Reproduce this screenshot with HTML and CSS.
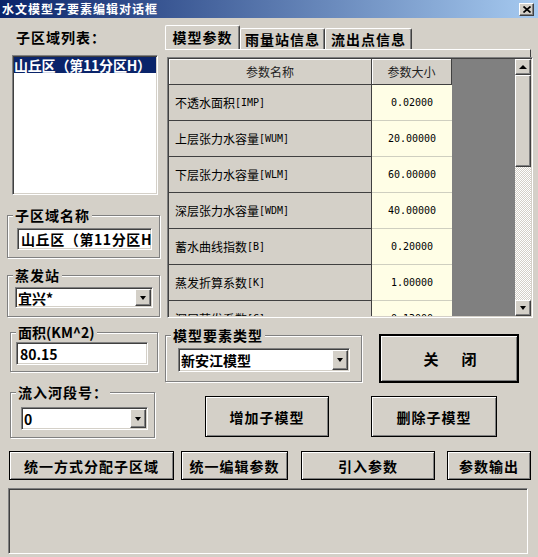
FILE: index.html
```html
<!DOCTYPE html>
<html lang="zh-CN">
<head>
    <meta charset="UTF-8">
    <title>水文模型子要素编辑对话框</title>
    <link rel="stylesheet" href="styles.css">
</head>
<body>

<div class="dialog">
    <div class="titlebar">
        <span class="title">水文模型子要素编辑对话框</span>
        <span class="title-close">
            <svg width="8" height="7" viewBox="0 0 8 7"><path d="M0.5 0.5 L7.5 6.5 M7.5 0.5 L0.5 6.5" stroke="#000" stroke-width="1.7"/></svg>
        </span>
    </div>

    <div class="main">
        <!-- left column -->
        <div class="left-col">
            <div class="list-label">子区域列表：</div>
            <div class="listbox sunken">
                <div class="list-item selected">山丘区（第11分区H）</div>
            </div>

            <div class="group g-name">
                <div class="group-title">子区域名称</div>
                <div class="textbox sunken tb-name">山丘区（第11分区H</div>
            </div>

            <div class="group g-evap">
                <div class="group-title">蒸发站</div>
                <div class="combo sunken cb-evap">
                    <span class="combo-text">宜兴*</span>
                    <span class="combo-btn raised"><span class="arrow-down"></span></span>
                </div>
            </div>

            <div class="group g-area">
                <div class="group-title title-area">面积(KM^2)</div>
                <div class="textbox sunken tb-area">80.15</div>
            </div>

            <div class="group g-inflow">
                <div class="group-title">流入河段号：</div>
                <div class="combo sunken cb-inflow">
                    <span class="combo-text">0</span>
                    <span class="combo-btn raised"><span class="arrow-down"></span></span>
                </div>
            </div>
        </div>

        <!-- right column -->
        <div class="right-col">
            <div class="tabs">
                <div class="tab active tab-1">模型参数</div>
                <div class="tab tab-2">雨量站信息</div>
                <div class="tab tab-3">流出点信息</div>
            </div>
            <div class="tab-line"></div>

            <div class="grid sunken">
                <div class="grid-table">
                    <div class="grid-head">
                        <div class="head-name">参数名称</div>
                        <div class="head-val">参数大小</div>
                    </div>
                    <div class="grid-row"><div class="cell-name">不透水面积<span class="mono">[IMP]</span></div><div class="cell-val">0.02000</div></div>
                    <div class="grid-row"><div class="cell-name">上层张力水容量<span class="mono">[WUM]</span></div><div class="cell-val">20.00000</div></div>
                    <div class="grid-row"><div class="cell-name">下层张力水容量<span class="mono">[WLM]</span></div><div class="cell-val">60.00000</div></div>
                    <div class="grid-row"><div class="cell-name">深层张力水容量<span class="mono">[WDM]</span></div><div class="cell-val">40.00000</div></div>
                    <div class="grid-row"><div class="cell-name">蓄水曲线指数<span class="mono">[B]</span></div><div class="cell-val">0.20000</div></div>
                    <div class="grid-row"><div class="cell-name">蒸发折算系数<span class="mono">[K]</span></div><div class="cell-val">1.00000</div></div>
                    <div class="grid-row"><div class="cell-name">深层蒸发系数<span class="mono">[C]</span></div><div class="cell-val">0.13000</div></div>
                </div>
                <div class="grid-filler"></div>
                <div class="vscroll">
                    <div class="sb-btn raised"><span class="arrow-up"></span></div>
                    <div class="sb-thumb raised"></div>
                    <div class="sb-track"></div>
                    <div class="sb-btn raised"><span class="arrow-down"></span></div>
                </div>
            </div>

            <div class="type-row">
                <div class="group g-type">
                    <div class="group-title">模型要素类型</div>
                    <div class="combo sunken cb-type">
                        <span class="combo-text">新安江模型</span>
                        <span class="combo-btn raised"><span class="arrow-down"></span></span>
                    </div>
                </div>
                <div class="btn btn-close">关　闭</div>
            </div>

            <div class="action-row">
                <div class="btn btn-add">增加子模型</div>
                <div class="btn btn-del">删除子模型</div>
            </div>
        </div>
    </div>

    <div class="bottom-bar">
        <div class="btn btn-b1">统一方式分配子区域</div>
        <div class="btn btn-b2">统一编辑参数</div>
        <div class="btn btn-b3">引入参数</div>
        <div class="btn btn-b4">参数输出</div>
    </div>

    <div class="status sunken"></div>
</div>

</body>
</html>
```

FILE: styles.css
```css
* {
    box-sizing: border-box;
}

body {
    margin: 0;
    background: #d4d0c8;
    font-family: "Noto Sans CJK SC", sans-serif;
    color: #000;
}

.dialog {
    width: 538px;
    height: 557px;
    overflow: hidden;
}

/* 3d borders */
.sunken {
    border: 1px solid;
    border-color: #808080 #fff #fff #808080;
    box-shadow: inset 1px 1px #404040, inset -1px -1px #d4d0c8;
}

.raised {
    background: #d4d0c8;
    border: 1px solid;
    border-color: #fff #404040 #404040 #fff;
    box-shadow: inset -1px -1px #808080;
}

/* title bar */
.titlebar {
    height: 18px;
    display: flex;
    align-items: center;
    justify-content: space-between;
    padding: 0 4px 0 2px;
    background: linear-gradient(to right, #0a246a, #a6caf0);
}

.title {
    color: #fff;
    font-size: 12px;
    font-weight: bold;
    letter-spacing: 1px;
    line-height: 18px;
}

.title-close {
    width: 15px;
    height: 13px;
    display: flex;
    align-items: center;
    justify-content: center;
    background: #d4d0c8;
    border: 1px solid;
    border-color: #fff #404040 #404040 #fff;
    box-shadow: inset -1px -1px #808080;
}

/* layout */
.main {
    display: flex;
    padding-left: 7px;
}

.left-col {
    width: 153px;
}

.right-col {
    width: 368px;
    margin-left: 5px;
}

/* left column */
.list-label {
    height: 37px;
    padding: 10px 0 0 9px;
    font-size: 14px;
    font-weight: bold;
    line-height: 18px;
    letter-spacing: 1px;
}

.listbox {
    width: 146px;
    height: 140px;
    margin-left: 5px;
    padding: 1px;
    background: #fff;
}

.list-item {
    height: 16px;
    font-size: 14px;
    font-weight: bold;
    line-height: 16px;
    letter-spacing: -0.2px;
    white-space: nowrap;
}

.list-item.selected {
    background: #0a246a;
    color: #fff;
}

.group {
    border: 1px solid #808080;
    box-shadow: 1px 1px 0 #fff, inset 1px 1px 0 #fff;
}

.group-title {
    display: table;
    margin: -9px 0 0 5px;
    padding: 0 2px;
    background: #d4d0c8;
    font-size: 14px;
    font-weight: bold;
    line-height: 16px;
    letter-spacing: 1px;
}

.title-area {
    letter-spacing: 0;
}

.textbox {
    background: #fff;
    padding: 0 3px;
    font-size: 14px;
    font-weight: bold;
    white-space: nowrap;
    display: flex;
    align-items: center;
}

.combo {
    display: flex;
    background: #fff;
    padding: 1px;
}

.combo-text {
    flex: 1;
    padding-left: 1px;
    font-size: 14px;
    font-weight: bold;
    display: flex;
    align-items: center;
    white-space: nowrap;
}

.combo-btn {
    width: 16px;
    display: flex;
    align-items: center;
    justify-content: center;
}

.arrow-down {
    width: 0;
    height: 0;
    border-left: 3px solid transparent;
    border-right: 3px solid transparent;
    border-top: 4px solid #000;
}

.arrow-up {
    width: 0;
    height: 0;
    border-left: 4px solid transparent;
    border-right: 4px solid transparent;
    border-bottom: 4px solid #000;
}

.g-name {
    margin-top: 20px;
    padding-bottom: 7px;
}

.tb-name {
    width: 135px;
    height: 22px;
    margin: 5px 0 0 9px;
    letter-spacing: 0.6px;
}

.g-evap {
    margin-top: 17px;
    padding-bottom: 8px;
}

.cb-evap {
    width: 138px;
    height: 21px;
    margin: 4px 0 0 7px;
}

.g-area {
    width: 148px;
    margin: 15px 0 0 3px;
    padding-bottom: 6px;
}

.tb-area {
    width: 132px;
    height: 23px;
    margin: 2px 0 0 5px;
}

.g-inflow {
    width: 145px;
    margin: 20px 0 0 3px;
    padding-bottom: 7px;
}

.cb-inflow {
    width: 127px;
    height: 23px;
    margin: 7px 0 0 10px;
}

/* tabs */
.tabs {
    display: flex;
    align-items: flex-end;
    height: 24px;
    margin-top: 7px;
}

.tab {
    height: 21px;
    border: 1px solid;
    border-color: #fff #404040 transparent #fff;
    border-bottom: none;
    border-radius: 2px 2px 0 0;
    box-shadow: inset -1px 0 #808080;
    font-size: 14px;
    font-weight: bold;
    line-height: 20px;
    letter-spacing: 1px;
    text-align: center;
}

.tab.active {
    height: 24px;
    line-height: 22px;
}

.tab-1 { width: 75px; }
.tab-2 { width: 85px; }
.tab-3 { width: 87px; }

.tab-line {
    height: 8px;
    margin-right: 2px;
    border-top: 1px solid #fff;
    border-right: 1px solid #404040;
}

/* grid */
.grid {
    width: 366px;
    height: 261px;
    margin-left: 2px;
    padding: 1px;
    display: flex;
    overflow: hidden;
}

.grid-table {
    width: 283px;
    overflow: hidden;
    font-size: 12px;
}

.grid-head {
    display: flex;
    height: 26px;
}

.head-name,
.head-val {
    display: flex;
    align-items: center;
    justify-content: center;
    border-right: 1px solid #404040;
    border-bottom: 1px solid #404040;
    box-shadow: inset 1px 1px #fff;
    color: #222;
}

.head-name { width: 203px; }
.head-val { width: 80px; }

.grid-row {
    display: flex;
    height: 36px;
    flex-shrink: 0;
}

.cell-name {
    width: 203px;
    padding-left: 6px;
    display: flex;
    align-items: center;
    border-right: 1px solid #404040;
    border-bottom: 1px solid #404040;
    white-space: nowrap;
}

.cell-val {
    width: 80px;
    display: flex;
    align-items: center;
    justify-content: center;
    background: #fffee6;
    border-bottom: 1px solid #cfcfc0;
    font-family: "DejaVu Sans Mono", monospace;
    font-size: 10px;
}

.mono {
    font-family: "DejaVu Sans Mono", monospace;
    font-size: 10px;
}

.grid-filler {
    flex: 1;
    background: #808080;
}

.vscroll {
    width: 16px;
    display: flex;
    flex-direction: column;
    background-color: #fff;
    background-image: conic-gradient(#d4d0c8 25%, #fff 0 50%, #d4d0c8 0 75%, #fff 0);
    background-size: 2px 2px;
}

.sb-btn {
    height: 16px;
    display: flex;
    align-items: center;
    justify-content: center;
}

.sb-thumb {
    height: 92px;
}

.sb-track {
    flex: 1;
}

/* buttons */
.btn {
    display: flex;
    align-items: center;
    justify-content: center;
    background: #d4d0c8;
    border: 1px solid #000;
    box-shadow: inset 1px 1px #fff, inset -1px -1px #808080;
    font-size: 14px;
    font-weight: bold;
    letter-spacing: 1px;
    white-space: nowrap;
}

.type-row {
    display: flex;
    align-items: flex-start;
}

.g-type {
    width: 197px;
    margin-top: 17px;
    padding-bottom: 9px;
}

.cb-type {
    width: 172px;
    height: 24px;
    margin: 5px 0 0 12px;
}

.btn-close {
    width: 140px;
    height: 49px;
    margin: 16px 0 0 17px;
    border: 2px solid #000;
    font-size: 15px;
    letter-spacing: 4px;
    padding-left: 6px;
}

.action-row {
    display: flex;
    margin-top: 13px;
}

.btn-add {
    width: 124px;
    height: 41px;
    margin-left: 40px;
}

.btn-del {
    width: 126px;
    height: 41px;
    margin-left: 42px;
}

/* bottom */
.bottom-bar {
    display: flex;
    margin-top: 13px;
    padding-left: 9px;
}

.bottom-bar .btn {
    height: 29px;
}

.btn-b1 { width: 165px; }
.btn-b2 { width: 107px; margin-left: 7px; }
.btn-b3 { width: 134px; margin-left: 13px; }
.btn-b4 { width: 84px; margin-left: 12px; }

.status {
    width: 520px;
    height: 66px;
    margin: 8px 0 0 8px;
    background: #d4d0c8;
}
```
